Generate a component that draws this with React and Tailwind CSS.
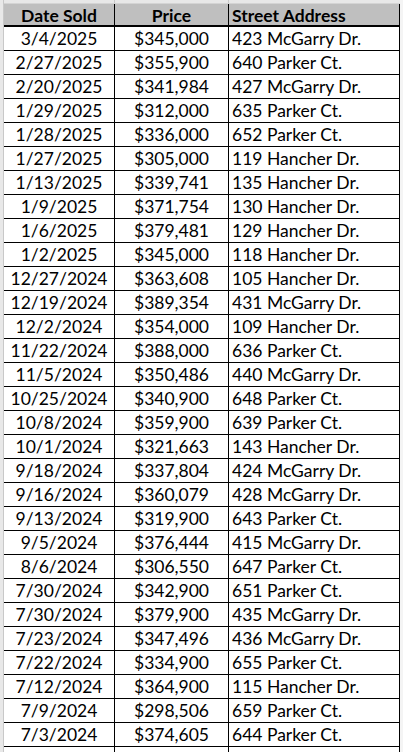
import React from "react";

const rows = [
  ["3/4/2025", "$345,000", "423 McGarry Dr."],
  ["2/27/2025", "$355,900", "640 Parker Ct."],
  ["2/20/2025", "$341,984", "427 McGarry Dr."],
  ["1/29/2025", "$312,000", "635 Parker Ct."],
  ["1/28/2025", "$336,000", "652 Parker Ct."],
  ["1/27/2025", "$305,000", "119 Hancher Dr."],
  ["1/13/2025", "$339,741", "135 Hancher Dr."],
  ["1/9/2025", "$371,754", "130 Hancher Dr."],
  ["1/6/2025", "$379,481", "129 Hancher Dr."],
  ["1/2/2025", "$345,000", "118 Hancher Dr."],
  ["12/27/2024", "$363,608", "105 Hancher Dr."],
  ["12/19/2024", "$389,354", "431 McGarry Dr."],
  ["12/2/2024", "$354,000", "109 Hancher Dr."],
  ["11/22/2024", "$388,000", "636 Parker Ct."],
  ["11/5/2024", "$350,486", "440 McGarry Dr."],
  ["10/25/2024", "$340,900", "648 Parker Ct."],
  ["10/8/2024", "$359,900", "639 Parker Ct."],
  ["10/1/2024", "$321,663", "143 Hancher Dr."],
  ["9/18/2024", "$337,804", "424 McGarry Dr."],
  ["9/16/2024", "$360,079", "428 McGarry Dr."],
  ["9/13/2024", "$319,900", "643 Parker Ct."],
  ["9/5/2024", "$376,444", "415 McGarry Dr."],
  ["8/6/2024", "$306,550", "647 Parker Ct."],
  ["7/30/2024", "$342,900", "651 Parker Ct."],
  ["7/30/2024", "$379,900", "435 McGarry Dr."],
  ["7/23/2024", "$347,496", "436 McGarry Dr."],
  ["7/22/2024", "$334,900", "655 Parker Ct."],
  ["7/12/2024", "$364,900", "115 Hancher Dr."],
  ["7/9/2024", "$298,506", "659 Parker Ct."],
  ["7/3/2024", "$374,605", "644 Parker Ct."],
];

export default function App() {
  return (
    <div className="w-[403px] h-[752px] overflow-hidden bg-white text-black font-['Lato',sans-serif] text-[17.5px] leading-none flex">
      {/* sheet edge on the left */}
      <div className="w-[4px] shrink-0 bg-[#e8e8e8] border-r border-[#c8c8c8]" />

      <div className="flex flex-col">
        {/* row above the table */}
        <div className="flex h-[5px] bg-[#e8e8e8] border-b border-[#d4d4d4]">
          <div className="w-[111px] border-r border-[#c8c8c8]" />
          <div className="w-[114px] border-r border-[#c8c8c8]" />
          <div className="w-[171px]" />
        </div>

        {/* header */}
        <div className="flex h-[24px] bg-[#bfbfbf] border-b-2 border-black font-bold">
          <div className="w-[111px] border-r border-black flex items-center justify-center pt-[3px]">Date Sold</div>
          <div className="w-[114px] border-r border-black flex items-center justify-center pt-[3px]">Price</div>
          <div className="w-[171px] border-r border-black flex items-center pl-[3px] pt-[3px]">Street Address</div>
        </div>

        {rows.map((r, i) => (
          <div key={i} className="flex h-[24px] shrink-0 border-b border-black">
            <div className="w-[111px] border-r border-black flex items-center justify-center pt-[1px]">{r[0]}</div>
            <div className="w-[114px] border-r border-black flex items-center justify-center pt-[1px]">{r[1]}</div>
            <div className="w-[171px] border-r border-black flex items-center pl-[3px] pt-[1px]">{r[2]}</div>
          </div>
        ))}

        <div className="flex h-[6px]">
          <div className="w-[111px] border-r border-black" />
          <div className="w-[114px] border-r border-black" />
          <div className="w-[171px] border-r border-black" />
        </div>
      </div>

      {/* sheet edge on the right */}
      <div className="w-[3px] shrink-0 bg-[#f4f4f4]" />
    </div>
  );
}
